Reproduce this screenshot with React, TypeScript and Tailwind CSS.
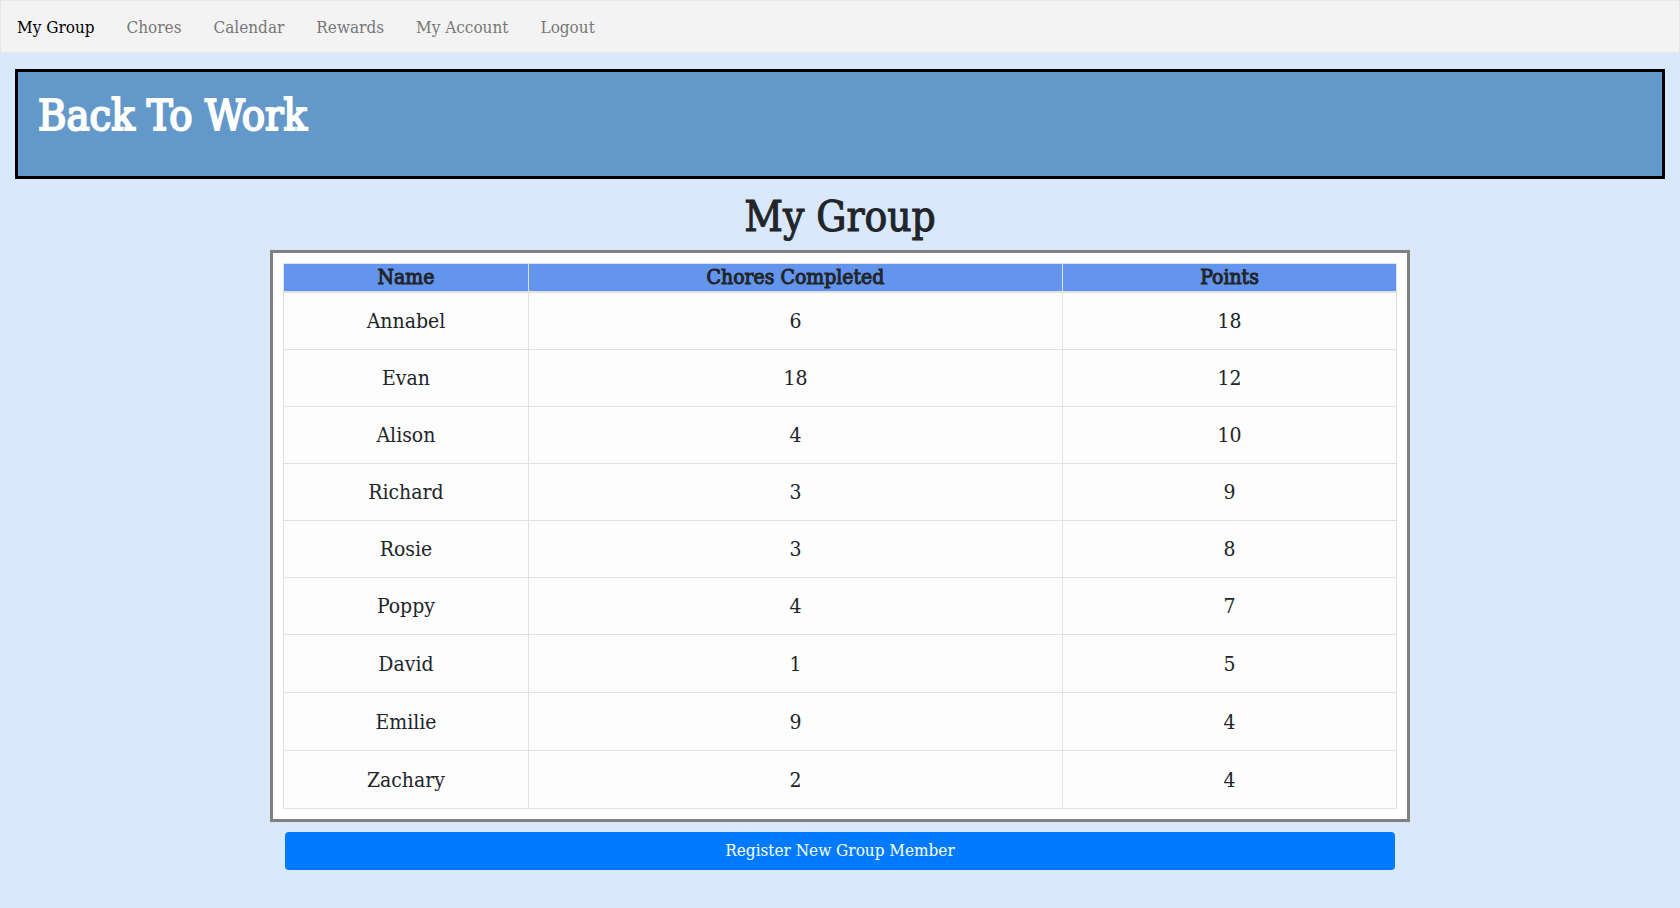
const links = ["My Group", "Chores", "Calendar", "Rewards", "My Account", "Logout"];

const members = [
  { name: "Annabel", chores: 6, points: 18 },
  { name: "Evan", chores: 18, points: 12 },
  { name: "Alison", chores: 4, points: 10 },
  { name: "Richard", chores: 3, points: 9 },
  { name: "Rosie", chores: 3, points: 8 },
  { name: "Poppy", chores: 4, points: 7 },
  { name: "David", chores: 1, points: 5 },
  { name: "Emilie", chores: 9, points: 4 },
  { name: "Zachary", chores: 2, points: 4 },
];

function NavBar() {
  return (
    <nav className="border border-[#e7e7e7] bg-[#f3f3f3]">
      <ul className="flex gap-8 px-4 pt-[13px] pb-3">
        {links.map((label, i) => (
          <li key={label}>
            <a
              href="#"
              className={i === 0 ? "block text-[17px] leading-[26px] text-black" : "block text-[17px] leading-[26px] text-[#777777]"}
            >
              {label}
            </a>
          </li>
        ))}
      </ul>
    </nav>
  );
}

function MembersTable() {
  return (
    <table className="w-full table-fixed border-collapse border border-[#dee2e6] bg-[#fdfdfd] text-center text-[21px] text-[#212529]">
      <thead>
        <tr className="bg-[#6495ed]">
          <th scope="col" className="w-[22%] border border-b-2 border-[#dee2e6] p-0 leading-[27px] font-normal [-webkit-text-stroke:1px]">Name</th>
          <th scope="col" className="w-[48%] border border-b-2 border-[#dee2e6] p-0 leading-[27px] font-normal [-webkit-text-stroke:1px]">Chores Completed</th>
          <th scope="col" className="w-[30%] border border-b-2 border-[#dee2e6] p-0 leading-[27px] font-normal [-webkit-text-stroke:1px]">Points</th>
        </tr>
      </thead>
      <tbody>
        {members.map((m) => (
          <tr key={m.name} className="[&:nth-last-child(-n+3)>td]:pt-[13px]">
            <td className="border border-[#dee2e6] px-3 pt-3 pb-3 leading-8">{m.name}</td>
            <td className="border border-[#dee2e6] px-3 pt-3 pb-3 leading-8">{m.chores}</td>
            <td className="border border-[#dee2e6] px-3 pt-3 pb-3 leading-8">{m.points}</td>
          </tr>
        ))}
      </tbody>
    </table>
  );
}

export default function App() {
  return (
    <div className="min-h-screen bg-[#d9e8fb] pb-9 font-['DejaVu_Serif_Condensed','DejaVu_Serif',serif]">
      <NavBar />
      <header className="mx-[15px] mt-4 border-[3px] border-black bg-[#6398ca] px-5 pt-[19px] pb-[37px]">
        <h1 className="text-[43px] leading-[48px] font-normal text-white [-webkit-text-stroke:2px]">Back To Work</h1>
      </header>
      <main className="mx-auto max-w-[1140px]">
        <h2 className="pt-[14px] pb-[9px] text-center text-[42px] leading-[48px] text-[#212529] [-webkit-text-stroke:1px]">My Group</h2>
        <div className="border-[3px] border-[#808080] bg-white p-[10px]">
          <MembersTable />
        </div>
        <div className="px-[15px] pt-[10px]">
          <button type="button" className="h-[38px] w-full rounded bg-[#007bff] text-[17px] text-white">
            Register New Group Member
          </button>
        </div>
      </main>
    </div>
  );
}
